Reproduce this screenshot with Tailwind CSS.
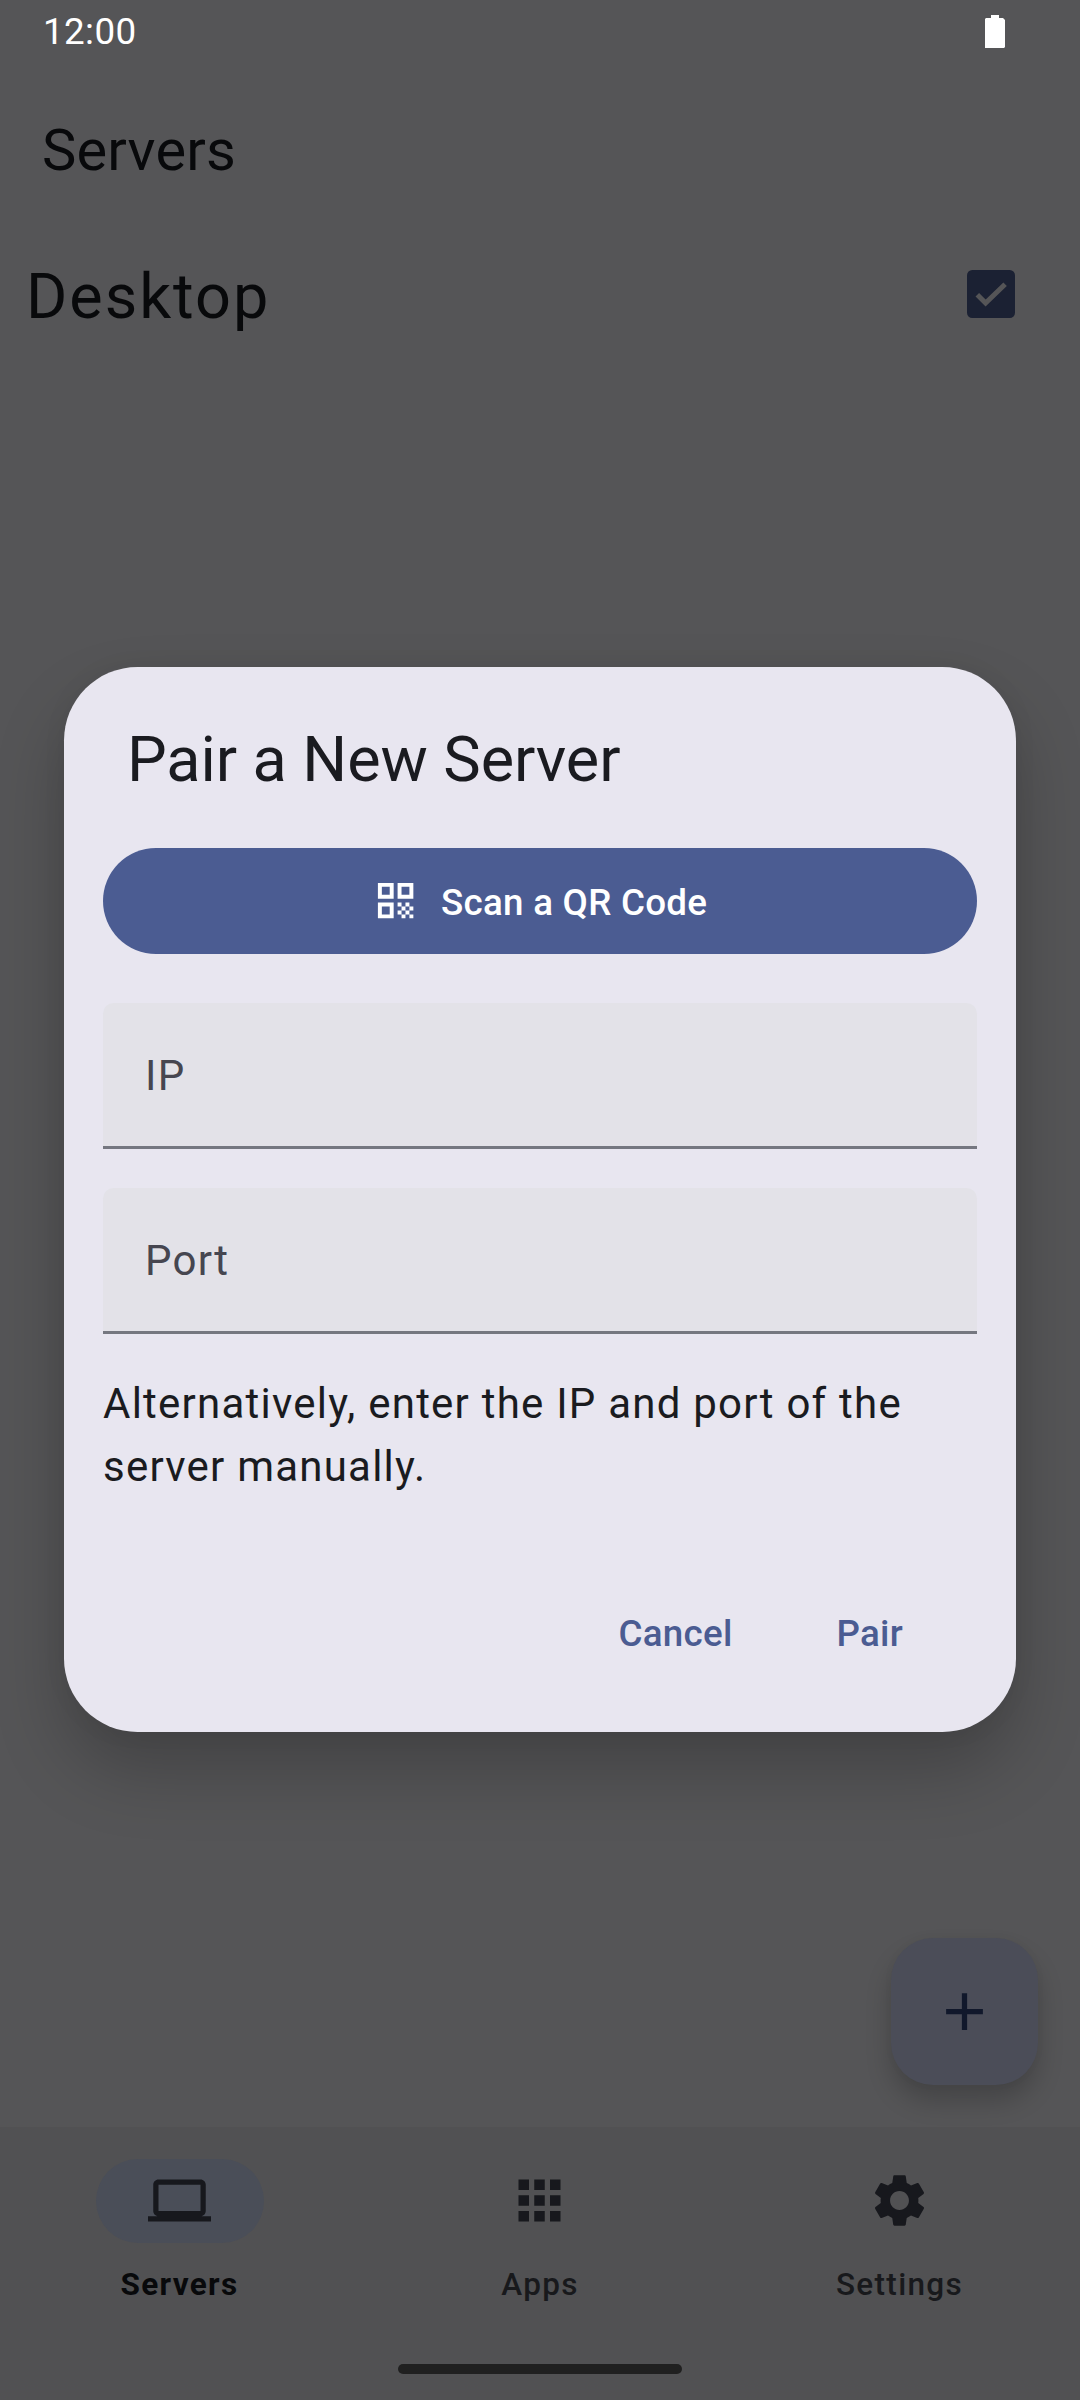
<!DOCTYPE html>
<html lang="en">
<head>
<meta charset="utf-8">
<title>Servers</title>
<script src="https://cdn.jsdelivr.net/npm/@tailwindcss/browser@4"></script>
</head>
<body class="bg-[#555557] font-[Roboto,sans-serif]">
<div class="relative flex h-[2400px] w-[1080px] flex-col overflow-hidden bg-[#555557] text-[#08090b]">

  <!-- Status bar -->
  <header class="flex h-[62px] items-center justify-between pl-[43px] pr-[75px] text-white">
    <span class="pt-[3px] text-[36.75px] leading-none tracking-[0.4px]">12:00</span>
    <svg class="h-[33px] w-[20px]" viewBox="0 0 20 33" fill="currentColor"><path d="M6 0h8v3h4l2 2v27l-1 1H0V4l1-1h5z"/></svg>
  </header>

  <!-- Top bar -->
  <h1 class="flex h-[175px] items-center pl-[42px] pt-[2px] text-[57.75px] tracking-[0.2px]">Servers</h1>

  <main class="flex-1">
    <div class="flex h-[114px] items-center justify-between pl-[26px] pr-[65px]">
      <span class="pt-[4px] text-[63px] leading-none tracking-[1.97px]">Desktop</span>
      <svg class="size-[48px]" viewBox="0 0 48 48">
        <rect width="48" height="48" rx="5.25" fill="#1b2133"/>
        <path d="M10.3 24.7l8.3 8.3 19.5-18.8" fill="none" stroke="#555557" stroke-width="5"/>
      </svg>
    </div>
  </main>

  <div class="flex h-[189px] justify-end pr-[42px]">
    <button class="flex size-[147px] items-center justify-center rounded-[42px] bg-[#4b4d58] shadow-[0_16px_26px_rgba(0,0,0,0.2),0_0_10px_rgba(0,0,0,0.03)]">
      <svg class="size-[63px]" viewBox="0 0 24 24" fill="#11182b"><path d="M19 13h-6v6h-2v-6H5v-2h6V5h2v6h6v2z"/></svg>
    </button>
  </div>

  <!-- Bottom navigation -->
  <nav class="relative flex h-[273px] flex-col items-center bg-[#515153] pt-[32px]">
    <div class="grid w-full grid-cols-3 text-[31.5px] font-medium leading-[42px] tracking-[1.3125px] text-[#18191c]">
      <div class="flex flex-col items-center gap-[21px]">
        <span class="flex h-[84px] w-[168px] items-center justify-center rounded-full bg-[#4a4e58] pr-[2px] pb-[2px]">
          <svg class="size-[63px]" viewBox="0 0 24 24" fill="#17181d"><path d="M20 18c1.1 0 1.99-.9 1.99-2L22 6c0-1.1-.9-2-2-2H4c-1.1 0-2 .9-2 2v10c0 1.1.9 2 2 2H0v2h24v-2h-4zM4 6h16v10H4V6z"/></svg>
        </span>
        <span class="pr-px font-bold text-[#08090b]">Servers</span>
      </div>
      <div class="flex flex-col items-center gap-[21px]">
        <span class="flex h-[84px] items-center pr-[2px] pb-[2px]">
          <svg class="size-[63px]" viewBox="0 0 24 24" fill="#17181d"><path d="M4 8h4V4H4v4zm6 12h4v-4h-4v4zm-6 0h4v-4H4v4zm0-6h4v-4H4v4zm6 0h4v-4h-4v4zm6-10v4h4V4h-4zm-6 4h4V4h-4v4zm6 6h4v-4h-4v4zm0 6h4v-4h-4v4z"/></svg>
        </span>
        <span>Apps</span>
      </div>
      <div class="flex flex-col items-center gap-[21px]">
        <span class="flex h-[84px] items-center pr-[2px] pb-[2px]">
          <svg class="size-[63px]" viewBox="0 0 24 24" fill="#17181d"><path d="M19.14 12.94c.04-.3.06-.61.06-.94 0-.32-.02-.64-.07-.94l2.03-1.58c.18-.14.23-.41.12-.61l-1.92-3.32c-.12-.22-.37-.29-.59-.22l-2.39.96c-.5-.38-1.03-.7-1.62-.94l-.36-2.54c-.04-.24-.24-.41-.48-.41h-3.84c-.24 0-.43.17-.47.41l-.36 2.54c-.59.24-1.13.57-1.62.94l-2.39-.96c-.22-.08-.47 0-.59.22L2.74 8.87c-.12.21-.08.47.12.61l2.03 1.58c-.05.3-.09.63-.09.94s.02.64.07.94l-2.03 1.58c-.18.14-.23.41-.12.61l1.92 3.32c.12.22.37.29.59.22l2.39-.96c.5.38 1.03.7 1.62.94l.36 2.54c.05.24.24.41.48.41h3.84c.24 0 .44-.17.47-.41l.36-2.54c.59-.24 1.13-.56 1.62-.94l2.39.96c.22.08.47 0 .59-.22l1.92-3.32c.12-.22.07-.47-.12-.61l-2.01-1.58zM12 15.6c-1.98 0-3.6-1.62-3.6-3.6s1.62-3.6 3.6-3.6 3.6 1.62 3.6 3.6-1.62 3.6-3.6 3.6z"/></svg>
        </span>
        <span class="pr-px">Settings</span>
      </div>
    </div>
    <div class="mt-[58px] h-[10px] w-[284px] rounded-full bg-[#202020]"></div>
  </nav>

  <!-- Pairing dialog -->
  <section class="absolute left-[64px] top-[667px] flex h-[1065px] w-[952px] flex-col rounded-[73.5px] bg-[#e8e6f0] px-[39px] pt-[51px] text-[#1a1b20] shadow-[0_38px_70px_rgba(0,0,0,0.22),0_0_24px_rgba(0,0,0,0.05)]">
    <h2 class="pl-[24px] text-[63px] leading-[84px] tracking-[-0.08px]">Pair a New Server</h2>
    <button class="mt-[46px] flex h-[106px] shrink-0 items-center justify-center gap-[22px] rounded-full bg-[#4b5c92] pr-px text-[36.75px] font-medium tracking-[0.2625px] text-white">
      <svg class="size-[47.25px]" viewBox="0 0 24 24" fill="currentColor"><path d="M3 11h8V3H3v8zm2-6h4v4H5V5zM3 21h8v-8H3v8zm2-6h4v4H5v-4zM13 3v8h8V3h-8zm6 6h-4V5h4v4zM19 19h2v2h-2zM13 13h2v2h-2zM15 15h2v2h-2zM13 17h2v2h-2zM15 19h2v2h-2zM17 17h2v2h-2zM17 13h2v2h-2zM19 15h2v2h-2z"/></svg>
      <span class="pt-[3px]">Scan a QR Code</span>
    </button>
    <div class="mt-[49px] flex flex-col gap-[39px] text-[42px] tracking-[1.25px] text-[#464650]">
      <div class="flex h-[146px] items-center rounded-t-[10.5px] border-b-[3px] border-[#757780] bg-[#e3e2e8] pl-[42px] pt-[2px]">IP</div>
      <div class="flex h-[146px] items-center rounded-t-[10.5px] border-b-[3px] border-[#757780] bg-[#e3e2e8] pl-[42px] pt-[2px]">Port</div>
    </div>
    <p class="mt-[38px] text-[42px] leading-[63px] tracking-[1.23px]">Alternatively, enter the IP and port of the server manually.</p>
    <div class="mt-[83px] flex h-[105px] items-center justify-end gap-[104px] pr-[74px] text-[36.75px] font-medium tracking-[0.2625px] text-[#4b5c92]">
      <span>Cancel</span>
      <span>Pair</span>
    </div>
  </section>
</div>
</body>
</html>
